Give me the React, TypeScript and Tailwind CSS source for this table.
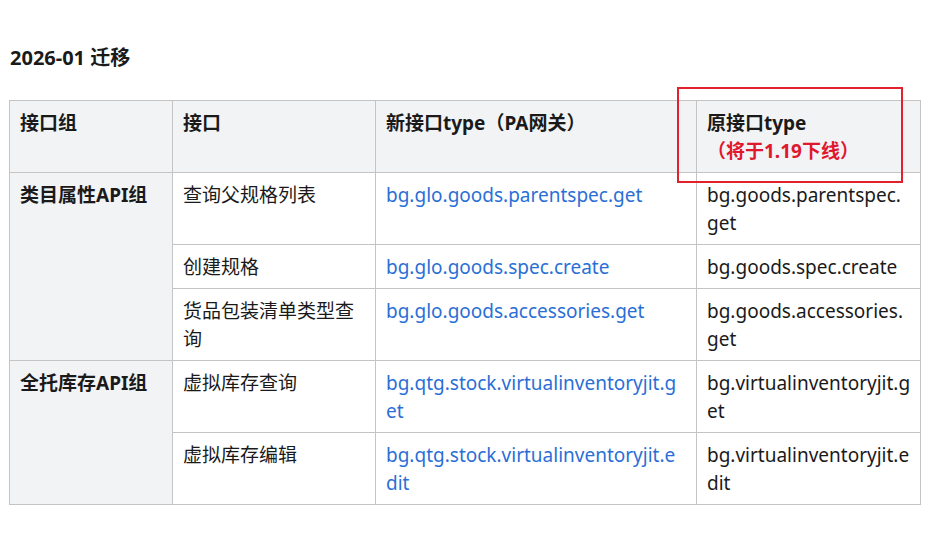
import type { ReactNode } from "react";

interface ApiRow {
  group?: { name: string; span: number };
  label: string;
  newType: string;
  oldType: string;
}

const rows: ApiRow[] = [
  {
    group: { name: "类目属性API组", span: 3 },
    label: "查询父规格列表",
    newType: "bg.glo.goods.parentspec.get",
    oldType: "bg.goods.parentspec.get",
  },
  { label: "创建规格", newType: "bg.glo.goods.spec.create", oldType: "bg.goods.spec.create" },
  {
    label: "货品包装清单类型查询",
    newType: "bg.glo.goods.accessories.get",
    oldType: "bg.goods.accessories.get",
  },
  {
    group: { name: "全托库存API组", span: 2 },
    label: "虚拟库存查询",
    newType: "bg.qtg.stock.virtualinventoryjit.get",
    oldType: "bg.virtualinventoryjit.get",
  },
  {
    label: "虚拟库存编辑",
    newType: "bg.qtg.stock.virtualinventoryjit.edit",
    oldType: "bg.virtualinventoryjit.edit",
  },
];

function Th({ children }: { children: ReactNode }) {
  return (
    <th className="border border-[#c4c4c4] bg-[#f2f3f5] py-[7.5px] pl-[10px] pr-[15px] text-left align-top font-bold">
      {children}
    </th>
  );
}

function Td({ children, className = "pr-[15px]" }: { children: ReactNode; className?: string }) {
  return (
    <td
      className={`border border-[#c4c4c4] py-[7.5px] pl-[10px] align-top [overflow-wrap:anywhere] ${className}`}
    >
      {children}
    </td>
  );
}

export default function App() {
  return (
    <div
      className="relative min-h-[538px] bg-white px-[9px] pt-[43px] text-[19px] leading-[28px] text-[#1a1a1a]"
      style={{ fontFamily: '"Noto Sans", "Noto Sans CJK SC", sans-serif' }}
    >
      <h2 className="mb-[27px] pl-px text-[20px] leading-[30px] font-bold">2026-01 迁移</h2>

      <table className="w-[911px] table-fixed border-collapse">
        <colgroup>
          <col className="w-[163px]" />
          <col className="w-[203px]" />
          <col className="w-[321px]" />
          <col className="w-[224px]" />
        </colgroup>
        <thead>
          <tr>
            <Th>接口组</Th>
            <Th>接口</Th>
            <Th>新接口type（PA网关）</Th>
            <Th>
              原接口type
              <br />
              <span className="text-[#e0182d]">（将于1.19下线）</span>
            </Th>
          </tr>
        </thead>
        <tbody>
          {rows.map((row) => (
            <tr key={row.newType}>
              {row.group && (
                <td
                  rowSpan={row.group.span}
                  className="border border-[#c4c4c4] bg-[#f2f3f5] py-[7.5px] pl-[10px] pr-[15px] align-top font-bold"
                >
                  {row.group.name}
                </td>
              )}
              <Td>{row.label}</Td>
              <Td className="pr-[15px] text-[#2a6fd6]">{row.newType}</Td>
              <Td className="pr-[8px]">{row.oldType}</Td>
            </tr>
          ))}
        </tbody>
      </table>

      {/* annotation box around the deprecated column header */}
      <div className="pointer-events-none absolute left-[677px] top-[87px] h-[96px] w-[226px] border-2 border-[#e3202e]" />
    </div>
  );
}
